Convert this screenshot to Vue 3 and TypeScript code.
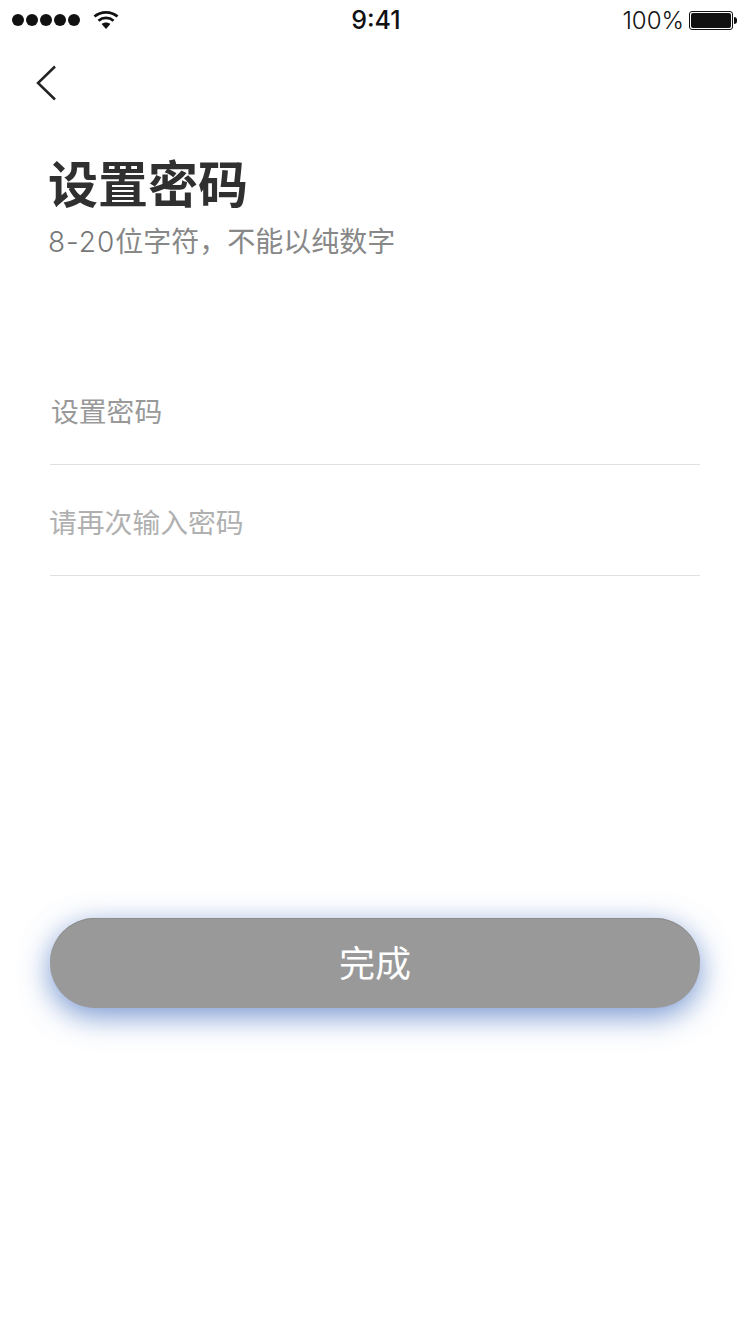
<script setup lang="ts">
const dots = [1, 2, 3, 4, 5];
</script>

<template>
  <div class="page">
    <div class="status-bar">
      <div class="status-left">
        <div class="signal">
          <span v-for="d in dots" :key="d" class="dot"></span>
        </div>
        <svg class="wifi" width="26" height="20" viewBox="0 0 26 20">
          <path d="M1.5 6.5C7.8 0.9 18.2 0.9 24.5 6.5" fill="none" stroke="#111" stroke-width="2.8" />
          <path d="M5.5 10.7C9.8 7 16.2 7 20.5 10.7" fill="none" stroke="#111" stroke-width="2.8" />
          <path d="M8.6 14C11.2 12 14.8 12 17.4 14L13 19Z" fill="#111" />
        </svg>
      </div>
      <div class="time">9:41</div>
      <div class="status-right">
        <span class="percent">100%</span>
        <div class="battery">
          <div class="battery-body"><div class="battery-fill"></div></div>
          <div class="battery-tip"></div>
        </div>
      </div>
    </div>

    <div class="nav">
      <svg width="22" height="36" viewBox="0 0 22 36">
        <path d="M20 1.5L3 18L20 34.5" fill="none" stroke="#222" stroke-width="2.5" />
      </svg>
    </div>

    <div class="heading">
      <h1 class="title">设置密码</h1>
      <p class="subtitle"><span class="range">8-20</span>位字符，不能以纯数字</p>
    </div>

    <div class="form">
      <div class="field first"><span class="filled">设置密码</span></div>
      <div class="field"><span class="placeholder">请再次输入密码</span></div>
    </div>

    <div class="action">
      <button class="submit">完成</button>
    </div>
  </div>
</template>

<style>
html,
body {
  margin: 0;
  background: #fff;
}
</style>

<style scoped>
.page {
  width: 750px;
  height: 1334px;
  overflow: hidden;
  background: #fff;
  font-family: "Liberation Sans", "Noto Sans CJK SC", sans-serif;
}

.status-bar {
  height: 40px;
  display: grid;
  grid-template-columns: 1fr auto 1fr;
  align-items: center;
  padding: 0 13px 0 12px;
  color: #111;
}

.status-left {
  display: flex;
  align-items: center;
  gap: 13px;
}

.signal {
  display: flex;
  gap: 2px;
}

.dot {
  width: 12px;
  height: 12px;
  border-radius: 50%;
  background: #111;
}

.time {
  margin-left: 3px;
  font-family: Inter, "Liberation Sans", sans-serif;
  font-size: 25px;
  font-weight: 500;
}

.status-right {
  display: flex;
  align-items: center;
  justify-content: flex-end;
  gap: 5px;
}

.percent {
  font-family: Inter, "Liberation Sans", sans-serif;
  font-size: 24px;
  font-weight: 300;
}

.battery {
  display: flex;
  align-items: center;
}

.battery-body {
  width: 40px;
  height: 15px;
  padding: 1px;
  border: 1px solid #111;
  border-radius: 3px;
  box-sizing: content-box;
}

.battery-fill {
  height: 100%;
  background: #111;
  border-radius: 2px;
}

.battery-tip {
  width: 3px;
  height: 7px;
  margin-left: 1px;
  background: #111;
  border-radius: 0 3px 3px 0;
}

.nav {
  height: 44px;
  padding: 25px 0 0 35px;
}

.nav svg {
  display: block;
}

.heading {
  padding: 0 50px;
  margin-top: 42px;
}

.title {
  margin: 0 0 0 -2px;
  font-size: 50px;
  line-height: 71px;
  font-weight: 700;
  color: #303030;
}

.subtitle {
  margin: 0;
  margin-left: -2px;
  font-size: 28px;
  line-height: 40px;
  color: #888;
}

.range {
  font-family: Inter, "Liberation Sans", sans-serif;
  font-weight: 300;
  letter-spacing: 1px;
  color: #777;
}

.form {
  margin: 91px 50px 0;
}

.field {
  height: 109px;
  padding-top: 1px;
  box-sizing: content-box;
  display: flex;
  align-items: center;
  border-bottom: 1px solid #e0e0e0;
  font-size: 27.8px;
}

.field.first {
  padding-left: 1px;
}

.filled {
  color: #999;
}

.placeholder {
  margin-left: -1px;
  color: #b0b0b0;
}

.action {
  margin: 342px 50px 0;
}

.submit {
  display: block;
  width: 100%;
  height: 90px;
  padding: 0 0 5px;
  border: none;
  border-radius: 45px;
  background: #999;
  color: #fff;
  font-family: inherit;
  font-size: 36px;
  box-shadow: inset 0 1px 0 #8c8c8c, 0 8px 30px rgba(60, 105, 190, 0.7);
}
</style>
